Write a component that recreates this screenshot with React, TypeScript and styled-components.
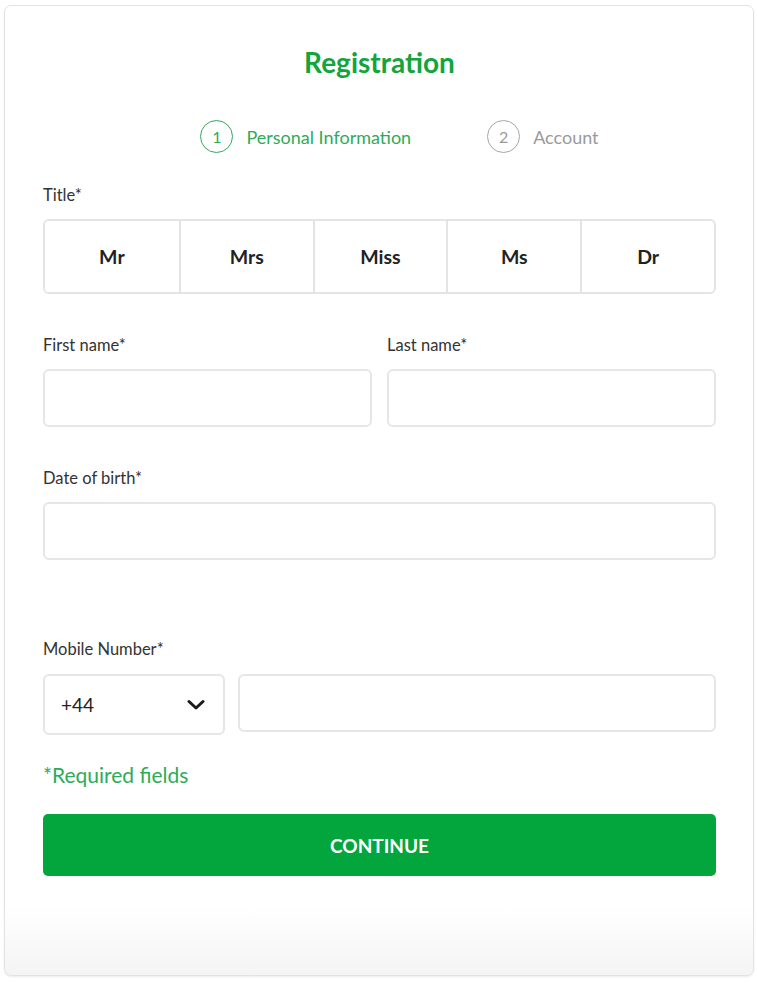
import React from "react";
import styled, { createGlobalStyle } from "styled-components";

const Global = createGlobalStyle`
  html, body { margin: 0; padding: 0; background: #ffffff; }
  body { font-family: "Lato", "Open Sans", sans-serif; color: #333; }
  * { box-sizing: border-box; }
`;

const Page = styled.div`
  padding: 5px 3px 7px 4px;
`;

const Card = styled.div`
  width: 750px;
  height: 971px;
  border: 1px solid #e3e3e3;
  border-radius: 7px;
  background: linear-gradient(to bottom, #ffffff 0%, #ffffff 93%, #f4f4f4 100%);
  box-shadow: 0 1px 2px rgba(0, 0, 0, 0.08);
  padding: 40px 37px 0 38px;
  display: flex;
  flex-direction: column;
`;

const Heading = styled.h1`
  margin: 0;
  text-align: center;
  font-size: 28px;
  line-height: 32px;
  font-weight: 700;
  color: #12a53c;
`;

const Stepper = styled.div`
  margin-top: 42px;
  display: flex;
  justify-content: center;
  gap: 76px;
  padding-left: 40px;
`;

const Step = styled.div<{ $active?: boolean }>`
  display: flex;
  align-items: center;
  gap: 13px;
  color: ${(p) => (p.$active ? "#2eab57" : "#9a9a9a")};
  font-size: 18px;
  line-height: 32px;
`;

const StepNum = styled.span<{ $active?: boolean }>`
  width: 33px;
  height: 33px;
  border-radius: 50%;
  border: 1.5px solid ${(p) => (p.$active ? "#2eab57" : "#a5a5a5")};
  display: flex;
  align-items: center;
  justify-content: center;
  font-size: 16px;
`;

const Label = styled.label<{ $mt: number }>`
  display: block;
  margin-top: ${(p) => p.$mt}px;
  font-size: 16.5px;
  line-height: 20px;
  color: #333;
`;

const TitleGroup = styled.div`
  margin-top: 14px;
  height: 75px;
  display: grid;
  grid-template-columns: repeat(5, 1fr);
  border: 2px solid #e4e4e4;
  border-radius: 6px;
  overflow: hidden;
`;

const TitleOption = styled.button`
  border: none;
  border-left: 2px solid #e4e4e4;
  background: #fff;
  font-family: inherit;
  font-size: 19.5px;
  font-weight: 700;
  color: #222;
  &:first-child { border-left: none; }
`;

const Row = styled.div<{ $mt: number; $gap?: number }>`
  margin-top: ${(p) => p.$mt}px;
  display: flex;
  gap: ${(p) => p.$gap ?? 15}px;
  align-items: flex-start;
`;

const Col = styled.div`
  flex: 1;
  display: flex;
  flex-direction: column;
`;

const Input = styled.div`
  flex: 1;
  height: 58px;
  border: 2px solid #e6e6e6;
  border-radius: 6px;
  background: #fff;
`;

const Select = styled.div`
  width: 182px;
  flex: none;
  height: 61px;
  border: 2px solid #e6e6e6;
  border-radius: 6px;
  display: flex;
  align-items: center;
  justify-content: space-between;
  padding: 0 18px 0 16px;
  font-size: 19px;
  color: #222;
`;

const Required = styled.div`
  margin-top: 28px;
  font-size: 21px;
  line-height: 24px;
  color: #2eab57;
`;

const ContinueButton = styled.button`
  margin-top: 27px;
  height: 62px;
  width: 100%;
  border: none;
  border-radius: 5px;
  background: #03a53d;
  color: #fff;
  font-family: inherit;
  font-size: 19px;
  font-weight: 700;
`;

export default function App() {
  return (
    <>
      <Global />
      <Page>
        <Card>
          <Heading>Registration</Heading>
          <Stepper>
            <Step $active>
              <StepNum $active>1</StepNum>
              Personal Information
            </Step>
            <Step>
              <StepNum>2</StepNum>
              Account
            </Step>
          </Stepper>

          <Label $mt={32}>Title*</Label>
          <TitleGroup>
            {["Mr", "Mrs", "Miss", "Ms", "Dr"].map((t) => (
              <TitleOption key={t}>{t}</TitleOption>
            ))}
          </TitleGroup>

          <Row $mt={41}>
            <Col>
              <Label $mt={0}>First name*</Label>
              <Row $mt={14}>
                <Input />
              </Row>
            </Col>
            <Col>
              <Label $mt={0}>Last name*</Label>
              <Row $mt={14}>
                <Input />
              </Row>
            </Col>
          </Row>

          <Label $mt={41}>Date of birth*</Label>
          <Row $mt={14}>
            <Input />
          </Row>

          <Label $mt={79}>Mobile Number*</Label>
          <Row $mt={15} $gap={13}>
            <Select>
              <span>+44</span>
              <svg width="18" height="12" viewBox="0 0 18 12">
                <polyline
                  points="2,2.5 9,9 16,2.5"
                  fill="none"
                  stroke="#1a1a1a"
                  strokeWidth="3"
                  strokeLinecap="round"
                  strokeLinejoin="round"
                />
              </svg>
            </Select>
            <Input />
          </Row>

          <Required>*Required fields</Required>
          <ContinueButton>CONTINUE</ContinueButton>
        </Card>
      </Page>
    </>
  );
}
